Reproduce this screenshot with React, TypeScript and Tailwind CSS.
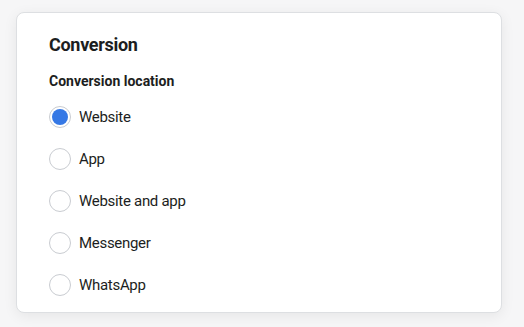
const options = ["Website", "App", "Website and app", "Messenger", "WhatsApp"];

export default function App() {
  return (
    <main
      className="h-[327px] w-[524px] bg-[#f6f6f7] pl-4 pt-3 text-[#1c1e21]"
      style={{ fontFamily: "Roboto, 'Liberation Sans', sans-serif" }}
    >
      <div className="h-[301px] w-[486px] rounded-lg border border-[#dddfe2] bg-white pl-8 pt-[20px] shadow-[0_3px_14px_rgba(0,0,0,0.07)]">
        <h2 className="text-[18px] leading-6 font-bold tracking-[-0.3px]">Conversion</h2>
        <h3 className="mt-[15px] text-[14px] leading-[18px] font-bold">Conversion location</h3>
        <ul className="mt-[6px]">
          {options.map((o, i) => (
            <li key={o} className="flex h-[42px] items-center gap-2">
              <span className="flex h-[22px] w-[22px] items-center justify-center rounded-full border border-[#c9ccd1] bg-white">
                {i === 0 && <span className="h-[16px] w-[16px] rounded-full bg-[#3578e5]" />}
              </span>
              <span className="text-[15px] leading-5 tracking-[-0.3px] text-[#1c1e21]">{o}</span>
            </li>
          ))}
        </ul>
      </div>
    </main>
  );
}
